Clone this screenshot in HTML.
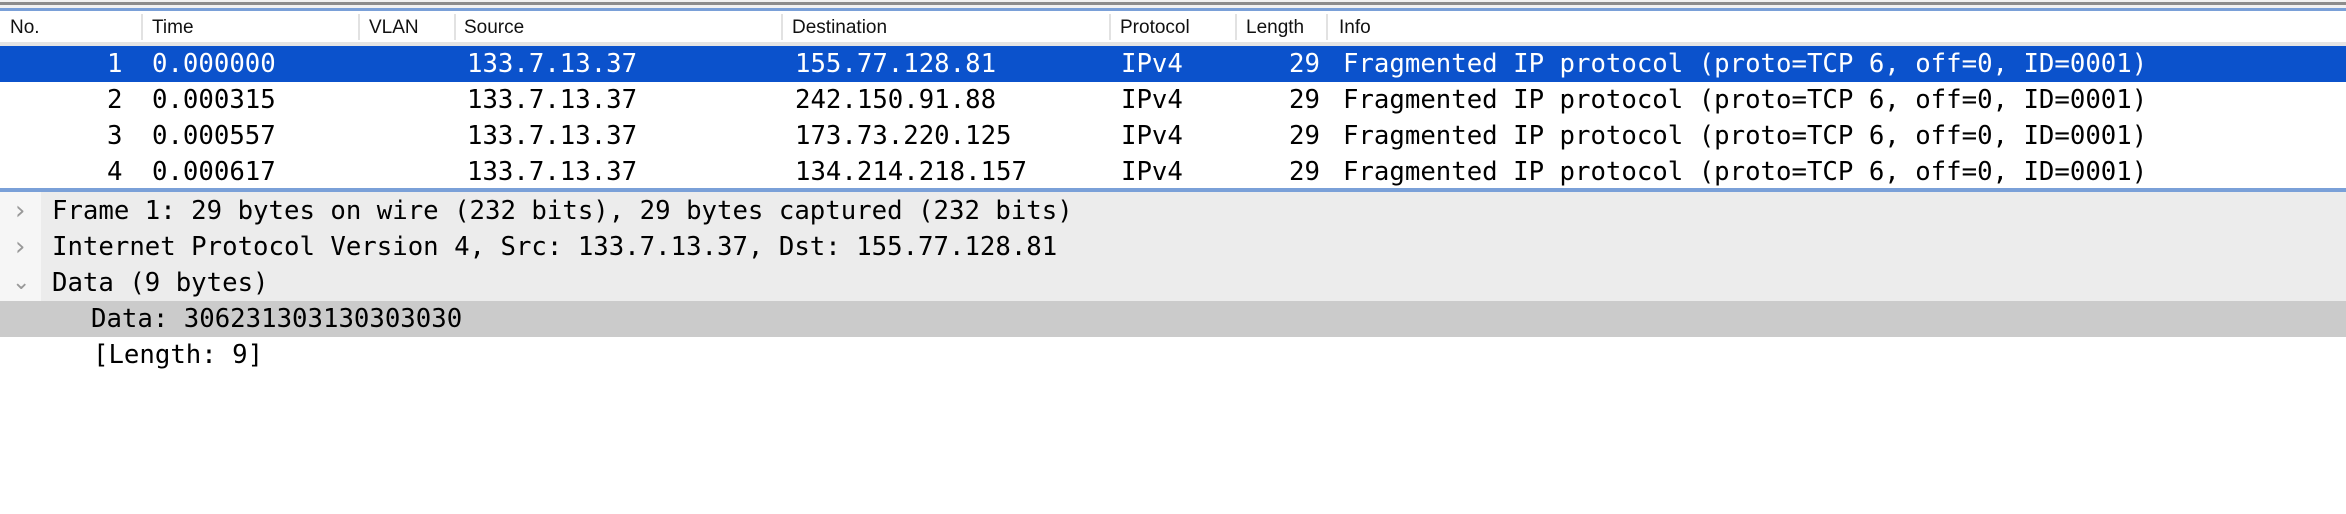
<!DOCTYPE html>
<html><head><meta charset="utf-8"><style>
*{margin:0;padding:0;box-sizing:border-box}
body{width:2346px;height:514px;background:#fff;position:relative;overflow:hidden;font-family:"DejaVu Sans Mono","Liberation Mono",monospace;font-size:25.7px;color:#000}
.a{position:absolute;white-space:pre}
.h{font-family:"Liberation Sans",sans-serif;font-size:19px;color:#111;top:17px}
.sep{position:absolute;top:14px;width:2px;height:26px;background:#e2e2e2}
.row{position:absolute;left:0;width:2346px;height:36px;line-height:36px}
.row span{position:absolute;white-space:pre}
.ar{color:#999;font-family:'DejaVu Sans',sans-serif;font-size:26px}
</style></head><body>
<div class="a" style="left:0;top:0;width:2346px;height:8px;background:#f2f2f2"></div>
<div class="a" style="left:0;top:2px;width:2346px;height:3px;background:#8c8c8c"></div>
<div class="a" style="left:0;top:8px;width:2346px;height:3px;background:#7aa0d8"></div>
<div class="a" style="left:0;top:42px;width:2346px;height:4px;background:#e4e4e4"></div>
<div class="a h" style="left:10px">No.</div>
<div class="sep" style="left:141px"></div>
<div class="a h" style="left:152px">Time</div>
<div class="sep" style="left:358px"></div>
<div class="a h" style="left:369px">VLAN</div>
<div class="sep" style="left:454px"></div>
<div class="a h" style="left:464px">Source</div>
<div class="sep" style="left:781px"></div>
<div class="a h" style="left:792px">Destination</div>
<div class="sep" style="left:1109px"></div>
<div class="a h" style="left:1120px">Protocol</div>
<div class="sep" style="left:1235px"></div>
<div class="a h" style="left:1246px">Length</div>
<div class="sep" style="left:1326px"></div>
<div class="a h" style="left:1339px">Info</div>

<div class="row" style="top:46px;background:#0b52cc;color:#fff"><span style="left:107px">1</span><span style="left:152px">0.000000</span><span style="left:467px">133.7.13.37</span><span style="left:795px">155.77.128.81</span><span style="left:1121px">IPv4</span><span style="left:1289px">29</span><span style="left:1343px">Fragmented IP protocol (proto=TCP 6, off=0, ID=0001)</span></div>
<div class="row" style="top:82px"><span style="left:107px">2</span><span style="left:152px">0.000315</span><span style="left:467px">133.7.13.37</span><span style="left:795px">242.150.91.88</span><span style="left:1121px">IPv4</span><span style="left:1289px">29</span><span style="left:1343px">Fragmented IP protocol (proto=TCP 6, off=0, ID=0001)</span></div>
<div class="row" style="top:118px"><span style="left:107px">3</span><span style="left:152px">0.000557</span><span style="left:467px">133.7.13.37</span><span style="left:795px">173.73.220.125</span><span style="left:1121px">IPv4</span><span style="left:1289px">29</span><span style="left:1343px">Fragmented IP protocol (proto=TCP 6, off=0, ID=0001)</span></div>
<div class="row" style="top:154px"><span style="left:107px">4</span><span style="left:152px">0.000617</span><span style="left:467px">133.7.13.37</span><span style="left:795px">134.214.218.157</span><span style="left:1121px">IPv4</span><span style="left:1289px">29</span><span style="left:1343px">Fragmented IP protocol (proto=TCP 6, off=0, ID=0001)</span></div>

<div class="a" style="left:0;top:188px;width:2346px;height:4px;background:#7aa0d8"></div>
<div class="a" style="left:0;top:192px;width:2346px;height:109px;background:#ececec"></div>
<div class="a" style="left:0;top:192px;width:41px;height:109px;background:#f6f6f6"></div>
<div class="row" style="top:193px"><span class="ar" style="left:15px">›</span><span style="left:52px">Frame 1: 29 bytes on wire (232 bits), 29 bytes captured (232 bits)</span></div>
<div class="row" style="top:229px"><span class="ar" style="left:15px">›</span><span style="left:52px">Internet Protocol Version 4, Src: 133.7.13.37, Dst: 155.77.128.81</span></div>
<div class="row" style="top:265px"><span class="ar" style="left:12px;font-size:22px">⌄</span><span style="left:52px">Data (9 bytes)</span></div>
<div class="row" style="top:301px;background:#cbcbcb"><span style="left:91px">Data: 306231303130303030</span></div>
<div class="row" style="top:337px"><span style="left:93px">[Length: 9]</span></div>
</body></html>
